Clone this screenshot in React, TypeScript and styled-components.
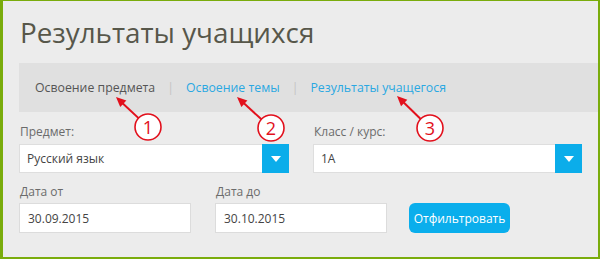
import * as React from 'react';
import styled, { createGlobalStyle } from 'styled-components';

const GlobalStyle = createGlobalStyle`
  html, body {
    margin: 0;
    padding: 0;
    background: #ececec;
  }
  body {
    font-family: 'Open Sans', 'Liberation Sans', sans-serif;
  }
`;

const Page = styled.div`
  position: relative;
  width: 600px;
  height: 259px;
  overflow: hidden;
`;

const Frame = styled.div`
  box-sizing: border-box;
  width: 600px;
  height: 259px;
  background: #ececec;
  border-style: solid;
  border-color: #7aac0c;
  border-width: 1px 2px 2px 3px;
  padding: 13px 0 0 16px;
`;

const Title = styled.h1`
  margin: 0 0 13px 1px;
  font-size: 27.8px;
  line-height: 36px;
  font-weight: 400;
  color: #57574a;
`;

const Tabs = styled.nav`
  display: flex;
  align-items: center;
  height: 49px;
  background: #e0e0e0;
  padding-left: 16px;
  font-size: 12.3px;
`;

const Tab = styled.span<{ $active?: boolean }>`
  color: ${p => (p.$active ? '#555555' : '#2aa8e2')};
`;

const Sep = styled.span`
  color: #c4c4c4;
  margin: 0 12px;
`;

const Form = styled.div`
  padding: 12px 0 0 0;
`;

const Row = styled.div<{ $gap: number }>`
  display: flex;
  align-items: flex-end;
  gap: ${p => p.$gap}px;
  margin-bottom: 11px;
`;

const Field = styled.div<{ $width: number }>`
  width: ${p => p.$width}px;
  display: flex;
  flex-direction: column;
`;

const Label = styled.label<{ $space: number }>`
  font-size: 12px;
  line-height: 16px;
  color: #6b6b6b;
  padding-left: 1px;
  margin-bottom: ${p => p.$space}px;
`;

const Select = styled.div`
  box-sizing: border-box;
  display: flex;
  height: 29px;
  background: #fff;
  border: 1px solid #dedede;
`;

const SelectValue = styled.span`
  flex: 1;
  display: flex;
  align-items: center;
  padding-left: 7px;
  font-size: 12px;
  color: #444;
`;

const SelectButton = styled.span`
  width: 27px;
  display: flex;
  align-items: center;
  justify-content: center;
  background: #0badea;
  margin: -1px -1px -1px 0;

  &::after {
    content: '';
    border-left: 5px solid transparent;
    border-right: 5px solid transparent;
    border-top: 6px solid #fff;
    margin-top: 1px;
  }
`;

const Input = styled.div`
  box-sizing: border-box;
  height: 30px;
  display: flex;
  align-items: center;
  padding-left: 8px;
  background: #fff;
  border: 1px solid #dcdcdc;
  font-size: 12px;
  color: #444;
`;

const Button = styled.button`
  box-sizing: border-box;
  height: 30px;
  width: 101px;
  margin-left: -2px;
  border: none;
  border-radius: 6px;
  background: #0aaeec;
  color: #fff;
  font-family: 'Open Sans', 'Liberation Sans', sans-serif;
  font-size: 12px;
  padding: 0;
`;

const Overlay = styled.svg`
  position: absolute;
  left: 0;
  top: 0;
  pointer-events: none;
`;

const callouts = [
  { n: 1, cx: 148, cy: 127, tx: 116, ty: 97 },
  { n: 2, cx: 271, cy: 128, tx: 237, ty: 97 },
  { n: 3, cx: 430, cy: 128, tx: 397, ty: 96 },
];

function Callout({ n, cx, cy, tx, ty }: { n: number; cx: number; cy: number; tx: number; ty: number }) {
  const r = 13;
  const dx = tx - cx;
  const dy = ty - cy;
  const len = Math.sqrt(dx * dx + dy * dy);
  const ux = dx / len;
  const uy = dy / len;
  const sx = cx + ux * r;
  const sy = cy + uy * r;
  // arrow head
  const hl = 10;
  const hw = 4.5;
  const bx = tx - ux * hl;
  const by = ty - uy * hl;
  const head = `${tx},${ty} ${bx - uy * hw},${by + ux * hw} ${bx + uy * hw},${by - ux * hw}`;
  return (
    <g>
      <line x1={sx} y1={sy} x2={bx + ux} y2={by + uy} stroke="#e2101c" strokeWidth={2} />
      <polygon points={head} fill="#e2101c" />
      <circle cx={cx} cy={cy} r={r} fill="#fff" stroke="#e2101c" strokeWidth={1.6} />
      <text
        x={cx}
        y={cy + 6.5}
        textAnchor="middle"
        fontFamily="'Open Sans', 'Liberation Sans', sans-serif"
        fontSize={18}
        fill="#e2101c"
      >
        {n}
      </text>
    </g>
  );
}

export default function App() {
  return (
    <Page>
      <GlobalStyle />
      <Frame>
        <Title>Результаты учащихся</Title>
        <Tabs>
          <Tab $active>Освоение предмета</Tab>
          <Sep>|</Sep>
          <Tab>Освоение темы</Tab>
          <Sep>|</Sep>
          <Tab>Результаты учащегося</Tab>
        </Tabs>
        <Form>
          <Row $gap={24}>
            <Field $width={270}>
              <Label $space={4}>Предмет:</Label>
              <Select>
                <SelectValue>Русский язык</SelectValue>
                <SelectButton />
              </Select>
            </Field>
            <Field $width={269}>
              <Label $space={4}>Класс / курс:</Label>
              <Select>
                <SelectValue>1А</SelectValue>
                <SelectButton />
              </Select>
            </Field>
          </Row>
          <Row $gap={24}>
            <Field $width={172}>
              <Label $space={3}>Дата от</Label>
              <Input>30.09.2015</Input>
            </Field>
            <Field $width={172}>
              <Label $space={3}>Дата до</Label>
              <Input>30.10.2015</Input>
            </Field>
            <Button>Отфильтровать</Button>
          </Row>
        </Form>
      </Frame>
      <Overlay width={600} height={259} viewBox="0 0 600 259">
        {callouts.map(c => (
          <Callout key={c.n} {...c} />
        ))}
      </Overlay>
    </Page>
  );
}
